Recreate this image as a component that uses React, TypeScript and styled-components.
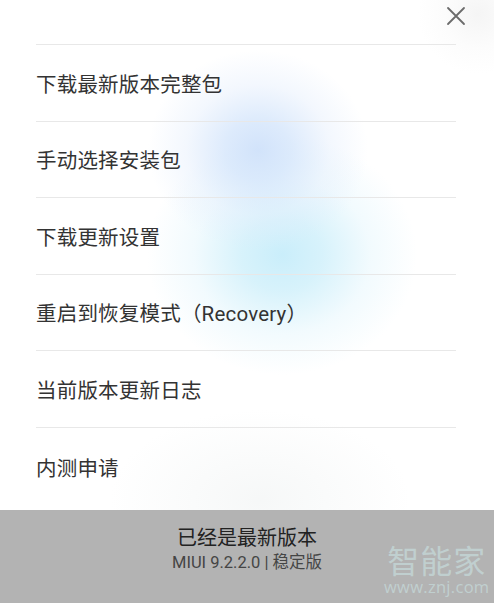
import React, { FC } from 'react';
import styled, { createGlobalStyle } from 'styled-components';

const GlobalStyle = createGlobalStyle`
  html, body {
    margin: 0;
    padding: 0;
    background: #ffffff;
  }
  body {
    font-family: 'Roboto', 'Noto Sans CJK SC', 'Noto Sans', sans-serif;
  }
`;

const menuItems = ['下载最新版本完整包', '手动选择安装包', '下载更新设置', '重启到恢复模式（Recovery）', '当前版本更新日志', '内测申请'];

const App: FC = () => {
  return (
    <>
      <GlobalStyle />
      <Screen>
        <Sheet>
          <TopBar>
            <CloseButton aria-label="close">
              <svg width="20" height="20" viewBox="0 0 20 20">
                <path d="M2 2 L18 18 M18 2 L2 18" stroke="#6b6b6b" strokeWidth="1.8" strokeLinecap="round" />
              </svg>
            </CloseButton>
          </TopBar>
          <Menu>
            {menuItems.map((item, index) => (
              <MenuRow key={index}>{item}</MenuRow>
            ))}
          </Menu>
        </Sheet>
        <Footer>
          <FooterTitle>已经是最新版本</FooterTitle>
          <FooterVersion>MIUI 9.2.2.0 | 稳定版</FooterVersion>
          <Watermark>
            <WatermarkName>智能家</WatermarkName>
            <WatermarkUrl>www.znj.com</WatermarkUrl>
          </Watermark>
        </Footer>
      </Screen>
    </>
  );
};

export default App;

const Screen = styled.div`
  width: 494px;
  height: 603px;
  display: flex;
  flex-direction: column;
  overflow: hidden;
`;

const Sheet = styled.div`
  flex: 1;
  display: flex;
  flex-direction: column;
  background:
    radial-gradient(circle at 478px 14px, rgba(235, 235, 235, 0.5) 0, rgba(245, 245, 245, 0.3) 34px, rgba(255, 255, 255, 0) 60px),
    radial-gradient(ellipse 110px 100px at 258px 150px, rgba(205, 224, 250, 0.9) 0, rgba(210, 228, 251, 0.75) 30%, rgba(225, 236, 252, 0.4) 65%, rgba(255, 255, 255, 0) 100%),
    radial-gradient(ellipse 135px 120px at 282px 255px, rgba(196, 236, 250, 0.9) 0, rgba(202, 238, 250, 0.75) 30%, rgba(222, 244, 252, 0.4) 65%, rgba(255, 255, 255, 0) 100%),
    radial-gradient(ellipse 150px 90px at 260px 500px, rgba(245, 247, 247, 0.9) 0, rgba(255, 255, 255, 0) 100%),
    #ffffff;
`;

const TopBar = styled.div`
  height: 44px;
  display: flex;
  justify-content: flex-end;
  align-items: flex-start;
  padding-right: 28px;
`;

const CloseButton = styled.div`
  width: 20px;
  height: 20px;
  margin-top: 6px;
  display: flex;
`;

const Menu = styled.div`
  display: flex;
  flex-direction: column;
  margin: 0 38px 0 36px;
`;

const MenuRow = styled.div`
  height: 76.5px;
  box-sizing: border-box;
  border-top: 1px solid #e8e8e8;
  display: flex;
  align-items: center;
  font-size: 20.5px;
  color: #333333;
  letter-spacing: 0.2px;

  &:last-child {
    height: 83px;
    padding-bottom: 4px;
  }
`;

const Footer = styled.div`
  height: 94px;
  flex-shrink: 0;
  background: #b3b3b3;
  position: relative;
  display: flex;
  flex-direction: column;
  align-items: center;
  padding-top: 15px;
  box-sizing: border-box;
`;

const FooterTitle = styled.div`
  font-size: 20px;
  line-height: 26px;
  color: #222222;
`;

const FooterVersion = styled.div`
  font-size: 16.5px;
  line-height: 24px;
  color: #454545;
`;

const Watermark = styled.div`
  position: absolute;
  left: 384px;
  top: 32px;
  display: flex;
  flex-direction: column;
  align-items: center;
  gap: 2px;
  color: rgba(205, 232, 232, 0.55);
`;

const WatermarkName = styled.div`
  font-family: 'Noto Sans CJK SC', sans-serif;
  font-size: 32px;
  line-height: 34px;
  letter-spacing: 1px;
`;

const WatermarkUrl = styled.div`
  font-family: 'Open Sans', 'Noto Sans', sans-serif;
  font-size: 16.5px;
  line-height: 18px;
  letter-spacing: 0.3px;
`;
